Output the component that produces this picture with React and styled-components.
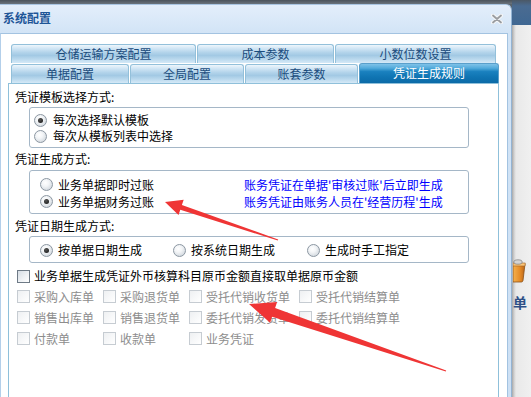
import React from 'react';
import styled, { createGlobalStyle } from 'styled-components';

const GlobalStyle = createGlobalStyle`
  html, body { margin: 0; padding: 0; background: #f0f0f0; overflow: hidden; }
  body { font-family: "Noto Sans CJK SC", "Noto Sans", sans-serif; font-size: 12px; }
  * { box-sizing: border-box; }
`;

const Screen = styled.div`
  position: relative;
  width: 531px;
  height: 397px;
  overflow: hidden;
  display: flex;
  background: #f0f0f0;
`;

const WindowColumn = styled.div`
  width: 512px;
  flex: none;
  display: flex;
  flex-direction: column;
  background: #5a636c;
`;

const TopStrip = styled.div`
  height: 4px;
  flex: none;
  background: linear-gradient(#4a525a, #6a737c);
`;

const Frame = styled.div`
  flex: 1;
  display: flex;
  flex-direction: column;
  border-top: 1px solid #a9c5e2;
  border-right: 1px solid #93b3d3;
  border-radius: 0 6px 0 0;
  padding-right: 3px;
  background: linear-gradient(#e3eefb 0px, #d2e4f6 28px, #cde0f4 100%);
  min-height: 0;
`;

const TitleBar = styled.div`
  height: 28px;
  flex: none;
  display: flex;
  align-items: center;
  justify-content: space-between;
  padding: 0 5px 0 3px;
`;

const Title = styled.span`
  font-size: 12px;
  font-weight: bold;
  color: #1e5597;
  line-height: 16px;
  margin-bottom: 3px;
`;

const Body = styled.div`
  flex: 1;
  min-height: 0;
  background: #fff;
  border-top: 1px solid #a3c3e1;
  border-left: 1px solid #b3cfea;
  border-right: 1px solid #a3c3e1;
  padding: 10px 0 0 7px;
  display: flex;
  flex-direction: column;
`;

const TabControl = styled.div`
  width: 491px;
  flex: 1;
  display: flex;
  flex-direction: column;
`;

const TabRow = styled.div`
  height: 19px;
  flex: none;
  display: flex;
  gap: 1px;
  padding-left: 3px;
  margin-bottom: ${p => p.$mb || 0}px;
`;

const Tab = styled.div`
  width: ${p => p.$w}px;
  height: ${p => (p.$active ? 20 : 19)}px;
  margin-top: ${p => (p.$active ? -1 : 0)}px;
  flex: none;
  border: 1px solid ${p => (p.$active ? '#5a9fcb' : '#93c0da')};
  border-bottom: none;
  border-radius: 3px 3px 0 0;
  background: ${p =>
    p.$active
      ? 'linear-gradient(#7fc2e8 0%, #52aadb 22%, #1a81bf 40%, #0f74b2 70%, #0b6aa7 100%)'
      : 'linear-gradient(#eef6fc 0%, #d0e5f4 20%, #b2d3ea 42%, #a2c9e4 58%, #bedbef 82%, #d5e9f7 100%)'};
  color: ${p => (p.$active ? '#ffffff' : '#1b4c7c')};
  font-size: 12px;
  line-height: 18px;
  text-align: center;
  white-space: nowrap;
`;

const Panel = styled.div`
  flex: 1;
  border: 1px solid #8fc0da;
  border-bottom: none;
  padding: 5px 0 0 6px;
  display: flex;
  flex-direction: column;
  align-items: flex-start;
`;

const Section = styled.div`
  font-size: 12px;
  line-height: 16px;
  height: 16px;
  color: #000;
  margin-top: ${p => p.$mt || 0}px;
  white-space: nowrap;
`;

const Group = styled.div`
  margin: ${p => p.$mt}px 0 0 14px;
  width: 440px;
  border: 1px solid #a5b7c7;
  border-radius: 3px;
  padding: ${p => p.$pad};
`;

const StackGroup = styled(Group)`
  display: flex;
  flex-direction: column;
`;

const GridGroup = styled(Group)`
  display: grid;
  grid-template-columns: 204px auto;
  grid-auto-rows: 17px;
  align-items: center;
`;

const RowGroup = styled(Group)`
  display: flex;
  align-items: center;
`;

const Option = styled.div`
  display: flex;
  align-items: center;
  gap: ${p => p.$gap}px;
  height: 16px;
  width: ${p => (p.$w ? `${p.$w}px` : 'auto')};
  flex: none;
  line-height: 16px;
  font-size: 12px;
  color: #000;
  white-space: nowrap;
`;

const Radio = styled.span`
  position: relative;
  width: 13px;
  height: 13px;
  flex: none;
  border-radius: 50%;
  border: 1px solid #8c97a2;
  background: radial-gradient(circle at 40% 35%, #ffffff 0%, #f3f5f7 35%, #d3d9df 80%, #c4ccd4 100%);
  &::after {
    content: '';
    display: ${p => (p.$checked ? 'block' : 'none')};
    position: absolute;
    left: 3px;
    top: 3px;
    width: 5px;
    height: 5px;
    border-radius: 50%;
    background: radial-gradient(circle at 40% 35%, #555 0%, #111 100%);
  }
`;

const Note = styled.span`
  color: #0000ff;
  font-size: 12px;
  line-height: 16px;
  white-space: nowrap;
`;

const CheckRow = styled.div`
  display: flex;
  align-items: center;
  gap: 4px;
  height: 16px;
  margin: ${p => p.$mt || 0}px 0 0 2px;
  font-size: 12px;
  line-height: 16px;
  color: ${p => (p.$disabled ? '#8d8d8d' : '#000')};
  white-space: nowrap;
`;

const Box = styled.span`
  width: 13px;
  height: 13px;
  flex: none;
  border: 1px solid ${p => (p.$disabled ? '#c6ccd2' : '#6e7a86')};
  background: ${p =>
    p.$disabled
      ? 'linear-gradient(135deg, #eef0f2 0%, #f8f9fa 60%, #ffffff 100%)'
      : 'linear-gradient(135deg, #d6dde4 0%, #eef1f4 55%, #ffffff 100%)'};
`;

const CheckGrid = styled.div`
  display: grid;
  grid-template-columns: 86px 86px 110px auto;
  grid-auto-rows: 21px;
  align-items: center;
  margin: 2px 0 0 0;
`;

const Side = styled.div`
  width: 19px;
  flex: none;
  display: flex;
  flex-direction: column;
`;

const SideTop = styled.div`
  height: 25px;
  flex: none;
  background: linear-gradient(#4b5866 0px, #4a6b91 6px, #3f6792 100%);
`;

const SideBody = styled.div`
  flex: 1;
  background: linear-gradient(to right, #a8a8a8 0px, #cfcfcf 2px, #e9e9e9 4px, #f0f0f0 100%);
  padding-top: 234px;
  display: flex;
  flex-direction: column;
  align-items: flex-start;
`;

const SideIcon = styled.svg`
  display: block;
  margin-left: 1px;
`;

const SideText = styled.span`
  margin-top: 11px;
  margin-left: 1px;
  font-size: 14px;
  line-height: 16px;
  font-weight: bold;
  color: #2d4f86;
`;

const Overlay = styled.svg`
  position: absolute;
  left: 0;
  top: 0;
  pointer-events: none;
`;

const CloseIcon = () => (
  <svg width="12" height="10" viewBox="0 0 12 10">
    <path d="M2 1.5 L10 8.5 M10 1.5 L2 8.5" stroke="#f4f6f8" strokeWidth="4" strokeLinecap="round" />
    <path d="M2 1.5 L10 8.5 M10 1.5 L2 8.5" stroke="#9a9da1" strokeWidth="1.8" strokeLinecap="round" />
  </svg>
);

const row1 = [
  { label: '仓储运输方案配置', w: 185 },
  { label: '成本参数', w: 137 },
  { label: '小数位数设置', w: 161 },
];
const row2 = [
  { label: '单据配置', w: 118 },
  { label: '全局配置', w: 114 },
  { label: '账套参数', w: 113 },
  { label: '凭证生成规则', w: 140, active: true },
];

const disabledItems = [
  '采购入库单', '采购退货单', '受托代销收货单', '受托代销结算单',
  '销售出库单', '销售退货单', '委托代销发货单', '委托代销结算单',
  '付款单', '收款单', '业务凭证',
];

export default function App() {
  return (
    <>
      <GlobalStyle />
      <Screen>
        <WindowColumn>
          <TopStrip />
          <Frame>
            <TitleBar>
              <Title>系统配置</Title>
              <CloseIcon />
            </TitleBar>
            <Body>
              <TabControl>
                <TabRow $mb={1}>
                  {row1.map(t => (
                    <Tab key={t.label} $w={t.w}>{t.label}</Tab>
                  ))}
                </TabRow>
                <TabRow>
                  {row2.map(t => (
                    <Tab key={t.label} $w={t.w} $active={t.active}>{t.label}</Tab>
                  ))}
                </TabRow>
                <Panel>
                  <Section>凭证模板选择方式:</Section>
                  <StackGroup $mt={2} $pad="4px 0 3px 4px">
                    <Option $gap={6}><Radio $checked />每次选择默认模板</Option>
                    <Option $gap={6}><Radio />每次从模板列表中选择</Option>
                  </StackGroup>

                  <Section $mt={3}>凭证生成方式:</Section>
                  <GridGroup $mt={3} $pad="5px 0 3px 10px">
                    <Option $gap={5}><Radio />业务单据即时过账</Option>
                    <Note>账务凭证在单据'审核过账'后立即生成</Note>
                    <Option $gap={5}><Radio $checked />业务单据财务过账</Option>
                    <Note>账务凭证由账务人员在'经营历程'生成</Note>
                  </GridGroup>

                  <Section $mt={4}>凭证日期生成方式:</Section>
                  <RowGroup $mt={2} $pad="5px 0 4px 10px">
                    <Option $gap={5} $w={133}><Radio $checked />按单据日期生成</Option>
                    <Option $gap={5} $w={134}><Radio />按系统日期生成</Option>
                    <Option $gap={5}><Radio />生成时手工指定</Option>
                  </RowGroup>

                  <CheckRow $mt={5}>
                    <Box />业务单据生成凭证外币核算科目原币金额直接取单据原币金额
                  </CheckRow>
                  <CheckGrid>
                    {disabledItems.map(item => (
                      <CheckRow key={item} $disabled>
                        <Box $disabled />{item}
                      </CheckRow>
                    ))}
                  </CheckGrid>
                </Panel>
              </TabControl>
            </Body>
          </Frame>
        </WindowColumn>
        <Side>
          <SideTop />
          <SideBody>
            <SideIcon width="13" height="24" viewBox="0 0 13 24">
              <defs>
                <linearGradient id="cup" x1="0" x2="1" y1="0" y2="0">
                  <stop offset="0" stopColor="#f6b24e" />
                  <stop offset="0.6" stopColor="#e48a26" />
                  <stop offset="1" stopColor="#b8641a" />
                </linearGradient>
              </defs>
              <path d="M0 5 L12 5 L10 21.5 Q9.6 23 8.4 23 L0 23 Z" fill="url(#cup)" stroke="#8a5016" strokeWidth="0.8" />
              <path d="M0 4 L12.3 4 L12 7 L0 7 Z" fill="#f9c57a" stroke="#a06020" strokeWidth="0.6" />
              <ellipse cx="5" cy="3" rx="4.2" ry="2.2" fill="#d4d4d4" stroke="#7d7d7d" strokeWidth="0.7" />
            </SideIcon>
            <SideText>单</SideText>
          </SideBody>
        </Side>

        <Overlay width="531" height="397" viewBox="0 0 531 397">
          <polygon
            fill="#ef3535"
            points="165,202 183.7,199.8 181.9,205.0 278.2,239.4 277.8,240.6 180.3,209.8 178.5,215.0"
          />
          <polygon
            fill="#ef3535"
            points="249,304 277.1,302.0 275.1,308.1 446.2,370.4 445.8,371.6 272.1,316.7 270.1,322.8"
          />
        </Overlay>
      </Screen>
    </>
  );
}
